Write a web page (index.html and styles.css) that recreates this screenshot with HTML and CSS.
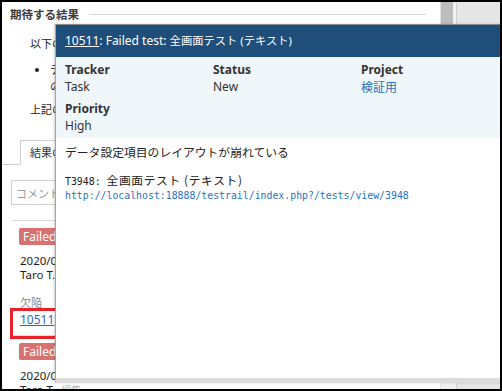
FILE: index.html
```html
<!DOCTYPE html>
<html lang="ja">
<head>
<meta charset="utf-8">
<title>Issue popup</title>
<link rel="stylesheet" href="styles.css">
</head>
<body>
<div class="frame">
  <main class="main">
    <div class="legend"><span class="legend-text">期待する結果</span><span class="legend-line"></span></div>
    <p class="para">以下の表示内容を確認すること</p>
    <ul class="list"><li>テキスト項目が正しく配置されていること<br>のレイアウトが崩れていないこと</li></ul>
    <p class="para para-tight">上記の内容を確認する</p>
    <div class="tabs"><div class="tab">結果の追加</div></div>
    <input class="comment" type="text" placeholder="コメントを入力">
    <section class="entry">
      <span class="badge">Failed</span>
      <div class="meta">
        <div class="meta-line">2020/03/12 10:15</div>
        <div class="meta-line">Taro T. <span class="edit">編集</span></div>
      </div>
      <div class="defect">
        <div class="defect-label">欠陥</div>
        <div class="defect-line"><span class="hl"><a class="defect-link" href="#">10511</a></span></div>
      </div>
    </section>
    <section class="entry">
      <span class="badge">Failed</span>
      <div class="meta">
        <div class="meta-line">2020/03/12 10:02</div>
        <div class="meta-line">Taro T. <span class="edit">編集</span></div>
      </div>
    </section>
  </main>
  <div class="vscroll">
    <div class="thumb"></div>
    <div class="arrow"><span class="tri"></span></div>
  </div>
  <aside class="side"></aside>

  <div class="popup">
    <div class="pop-head"><a class="pop-id" href="#">10511</a>: Failed test: <span class="head-jp">全画面テスト (テキスト)</span></div>
    <div class="pop-fields">
      <div class="field"><div class="f-label">Tracker</div><div class="f-value">Task</div></div>
      <div class="field"><div class="f-label">Status</div><div class="f-value">New</div></div>
      <div class="field"><div class="f-label">Project</div><div class="f-value"><a class="f-link" href="#">検証用</a></div></div>
      <div class="field"><div class="f-label">Priority</div><div class="f-value">High</div></div>
    </div>
    <div class="pop-body">
      <p class="desc">データ設定項目のレイアウトが崩れている</p>
      <div class="code">
        <div class="code-line"><span class="mono">T3948: </span><span class="jp">全画面テスト (テキスト)</span></div>
        <div class="code-line"><a class="mono url" href="#">http://localhost:18888/testrail/index.php?/tests/view/3948</a></div>
      </div>
    </div>
  </div>
</div>
</body>
</html>
```
FILE: styles.css
```css
* { box-sizing: border-box; }
html, body { margin: 0; padding: 0; }
body {
  width: 502px;
  height: 391px;
  overflow: hidden;
  background: #fff;
  font-family: "Noto Sans", "Noto Sans CJK JP", sans-serif;
  font-size: 12px;
  color: #333;
}
.frame {
  position: relative;
  width: 502px;
  height: 391px;
  border: 2px solid #000;
  overflow: hidden;
  display: grid;
  grid-template-columns: 438px 16px 1fr;
}

/* main column */
.main { padding: 0 14px 0 8px; min-width: 0; }
.legend { display: flex; align-items: center; height: 20px; margin-top: 2px; }
.legend-text { font-family: "Noto Sans CJK JP", sans-serif; font-size: 11.5px; font-weight: 700; color: #3a3a3a; }
.legend-line { flex: 1; height: 1px; background: #d6d6d6; margin-left: 10px; }
.para { margin: 10px 0 0 20px; font-family: "Noto Sans CJK JP", sans-serif; font-size: 11px; line-height: 18px; white-space: nowrap; color: #222; }
.para-tight { margin-top: 6px; line-height: 17px; }
.list { margin: 9px 0 0; padding-left: 40px; font-family: "Noto Sans CJK JP", sans-serif; font-size: 11px; line-height: 17px; white-space: nowrap; color: #222; }
.tabs { display: flex; margin: 22px -14px 0 -8px; padding-left: 18px; border-bottom: 1px solid #cfcfcf; }
.tab {
  height: 25px; margin-bottom: -1px; padding: 0 12px 0 9px;
  border: 1px solid #cfcfcf; border-bottom-color: #fff; background: #fff;
  font-family: "Noto Sans CJK JP", sans-serif; font-size: 11px; line-height: 23px; color: #333;
}
.comment {
  display: block; width: 415px; height: 25px; margin: 15px 0 0 1px; padding: 0 4px;
  border: 1px solid #cfcfcf; border-radius: 0; background: #fff;
  font-family: "Noto Sans CJK JP", sans-serif; font-size: 11px; color: #333;
}
.comment::placeholder { color: #9a9a9a; }
.entry { margin: 15px 0 0 1px; padding: 7px 0 7px 9px; border-top: 1px solid #dcdcdc; }
.entry + .entry { margin-top: 0; }
.badge {
  display: block; width: max-content; margin-left: -1px; padding: 0 4px; height: 17px;
  background: #d87271; color: #fff; border-radius: 2px;
  font-size: 12px; line-height: 17px;
}
.meta { margin-top: 9px; font-size: 11.5px; line-height: 14px; color: #222; }
.meta-line { white-space: nowrap; }
.edit { margin-left: 3px; font-family: "Noto Sans CJK JP", sans-serif; font-size: 10px; color: #b5b5b5; }
.defect { margin-top: 12px; }
.defect-label { font-family: "Noto Sans CJK JP", sans-serif; font-size: 11px; line-height: 17px; color: #8a8a8a; }
.defect-line { font-size: 12px; line-height: 17px; }
.defect-link { color: #2b6aae; text-decoration: underline; }
.hl { position: relative; }
.hl::after {
  content: ""; position: absolute; left: -10px; top: -3px; width: 47px; height: 25px;
  border: 3px solid #e8232b;
}

/* right scrollbar + side panel */
.vscroll { display: flex; flex-direction: column; justify-content: space-between; background: #f1f1f1; border-left: 1px solid #e2e2e2; }
.thumb { width: 12px; height: 40px; background: #bdbdbd; }
.arrow { height: 7px; display: flex; justify-content: center; align-items: center; padding-right: 1px; }
.tri { width: 0; height: 0; border-left: 4px solid transparent; border-right: 4px solid transparent; border-top: 5px solid #444; }
.side { background: #e6e6e6; border-left: 1px solid #cfcfcf; }

/* popup overlay */
.popup {
  position: absolute; left: 53px; top: 22px; width: 470px; height: 359px;
  background: #fff;
  border-top: 1px solid #8a8a8a; border-left: 1px solid #a3a3a3; border-bottom: 5px solid #dcdcdc;
  box-shadow: -1px 0 2px rgba(0,0,0,0.18);
}
.pop-head {
  height: 32px; padding-left: 9px; background: #1f4e7b; color: #fff;
  font-size: 12px; line-height: 32px; white-space: nowrap;
}
.head-jp { font-size: 11.3px; }
.pop-id { color: #fff; text-decoration: underline; }
.pop-fields {
  display: grid; grid-template-columns: 148px 148px 148px; row-gap: 4px;
  padding: 4px 9px; background: #eff7fb;
}
.f-label { font-size: 12px; line-height: 17px; font-weight: 700; color: #333; }
.f-value { font-size: 12px; line-height: 17px; color: #333; }
.f-link { color: #2b6fb8; text-decoration: none; font-family: "Noto Sans CJK JP", sans-serif; }
.pop-body { padding: 6px 9px; }
.desc { margin: 0; font-family: "Noto Sans CJK JP", monospace; font-size: 11.8px; line-height: 16px; color: #222; white-space: nowrap; }
.code { margin-top: 11.5px; }
.code-line { height: 15.7px; line-height: 15.7px; white-space: pre; color: #222; }
.mono { font-family: "DejaVu Sans Mono", monospace; font-size: 9.85px; }
.jp { font-family: "Noto Sans CJK JP", monospace; font-size: 11.8px; letter-spacing: 0.6px; }
.url { color: #2a72c3; text-decoration: none; }
```
